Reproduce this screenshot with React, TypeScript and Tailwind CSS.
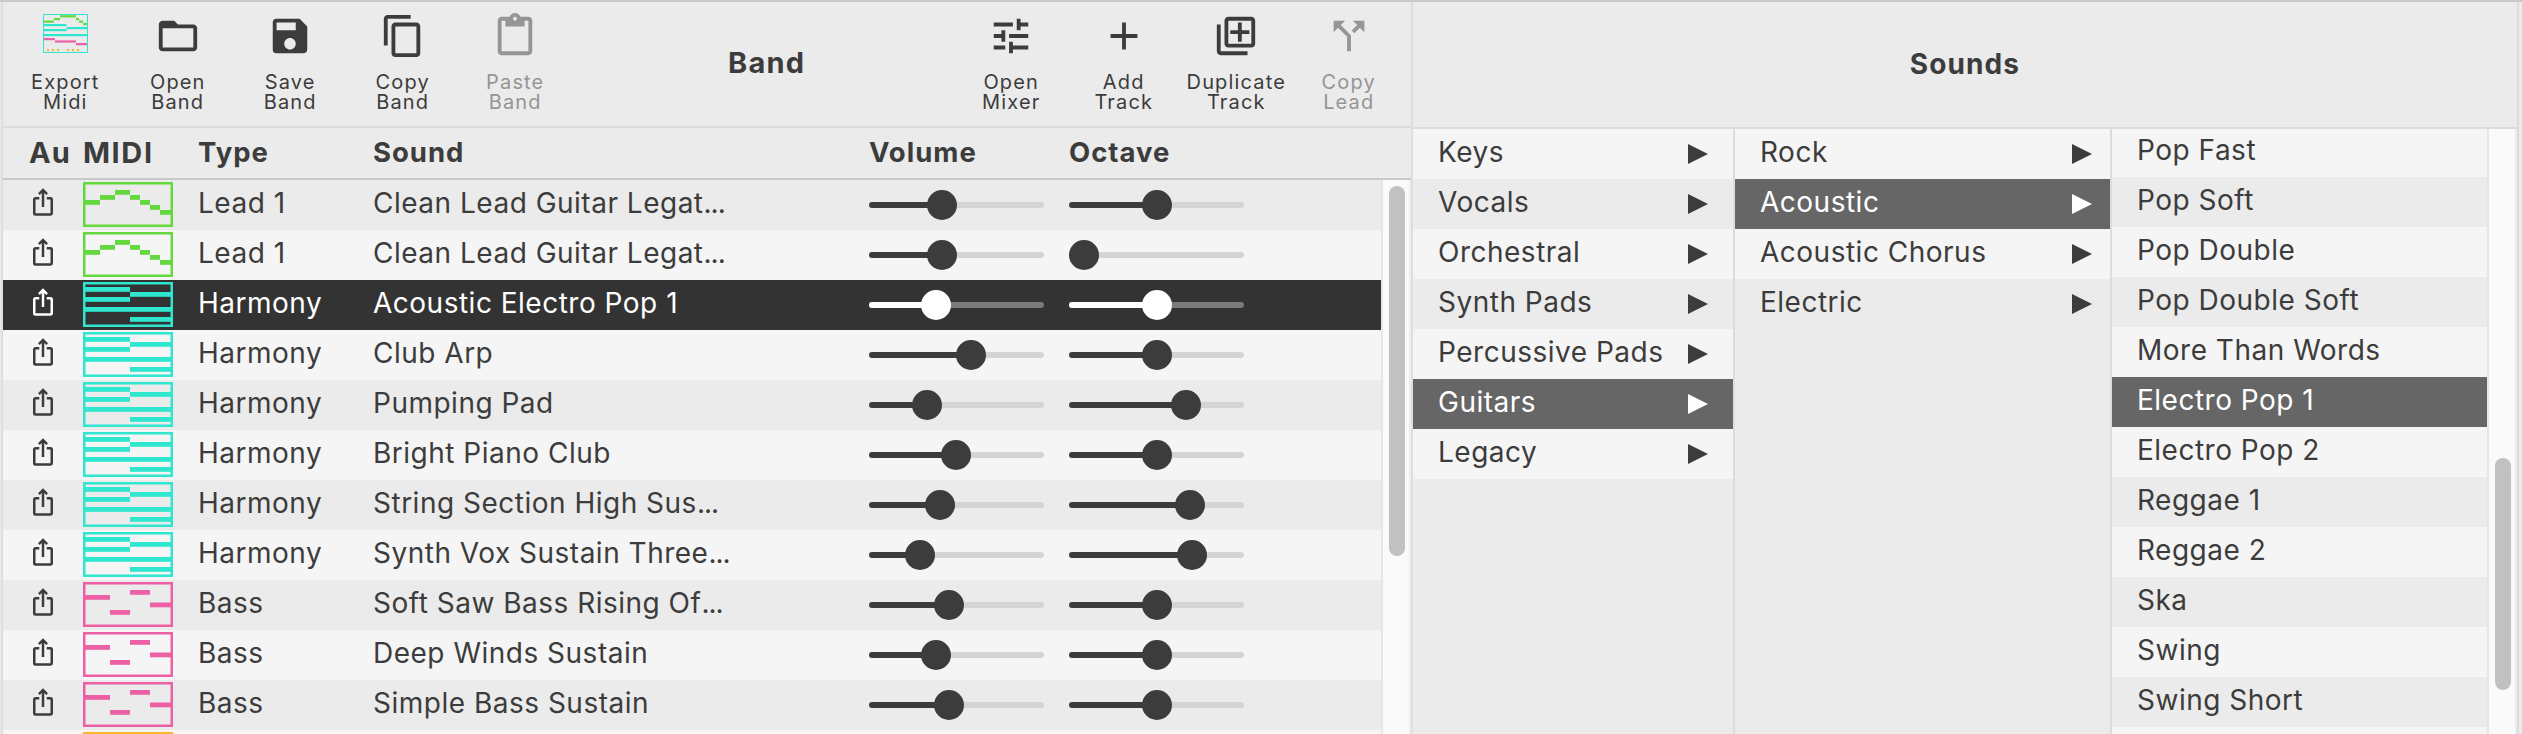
import React from "react";
import { MdFolderOpen, MdSave, MdContentCopy, MdContentPaste, MdTune, MdAdd, MdOutlineAddToPhotos, MdCallSplit, MdIosShare } from "react-icons/md";

type Kind = "lead" | "harmony" | "bass" | "drums";
type Track = { kind: Kind; type: string; sound: string; more?: boolean; vol: number; oct: number; active?: boolean };

const tracks: Track[] = [
  { kind: "lead", type: "Lead 1", sound: "Clean Lead Guitar Legat", more: true, vol: 73, oct: 88 },
  { kind: "lead", type: "Lead 1", sound: "Clean Lead Guitar Legat", more: true, vol: 73, oct: 15 },
  { kind: "harmony", type: "Harmony", sound: "Acoustic Electro Pop 1", vol: 67, oct: 88, active: true },
  { kind: "harmony", type: "Harmony", sound: "Club Arp", vol: 102, oct: 88 },
  { kind: "harmony", type: "Harmony", sound: "Pumping Pad", vol: 58, oct: 117 },
  { kind: "harmony", type: "Harmony", sound: "Bright Piano Club", vol: 87, oct: 88 },
  { kind: "harmony", type: "Harmony", sound: "String Section High Sus", more: true, vol: 71, oct: 121 },
  { kind: "harmony", type: "Harmony", sound: "Synth Vox Sustain Three", more: true, vol: 51, oct: 123 },
  { kind: "bass", type: "Bass", sound: "Soft Saw Bass Rising Of", more: true, vol: 80, oct: 88 },
  { kind: "bass", type: "Bass", sound: "Deep Winds Sustain", vol: 67, oct: 88 },
  { kind: "bass", type: "Bass", sound: "Simple Bass Sustain", vol: 80, oct: 88 },
  { kind: "drums", type: "", sound: "", vol: 73, oct: 88 },
];

const colors: Record<Kind, string> = { lead: "#64d83f", harmony: "#2fe6cf", bass: "#ee60a5", drums: "#fbb52c" };

const notes: Record<Kind, number[][]> = {
  lead: [[2, 18, 15], [17, 13, 15], [32, 8, 15], [47, 13, 10], [57, 18, 10], [67, 23, 10], [77, 28, 11]],
  harmony: [[2, 5, 45], [47, 10, 41], [2, 15, 45], [2, 25, 86], [47, 35, 41]],
  bass: [[2, 13, 25], [27, 28, 20], [47, 8, 20], [67, 20.5, 21]],
  drums: [],
};

function MidiThumb({ kind }: { kind: Kind }) {
  const c = colors[kind];
  return (
    <svg width="90" height="45" viewBox="0 0 90 45" className="block">
      <rect x="1.25" y="1.25" width="87.5" height="42.5" fill="none" stroke={c} strokeWidth="2.5" />
      {notes[kind].map(([x, y, w], i) => (
        <rect key={i} x={x} y={y} width={w} height="4.8" fill={c} />
      ))}
    </svg>
  );
}

function ExportGlyph() {
  const g = "#64d83f", t = "#2fe6cf", p = "#ee60a5", o = "#fbb52c";
  const bars: [number, number, number, string][] = [
    [1, 6.5, 10, g], [11, 4, 6, g], [17, 1.2, 16, g], [33, 4, 3, g], [36, 6.5, 4, g], [40, 9, 4, g],
    [1, 10, 22.5, t], [23.5, 13, 20.5, t], [1, 15, 22.5, t], [1, 20, 43, t],
    [1, 24, 11, p], [12, 26.4, 21, p], [33, 29, 11, p],
    [4, 35, 2, o], [9, 35, 2, o], [14, 35, 2, o], [24, 35, 2, o], [29, 35, 2, o], [34, 35, 2, o],
  ];
  return (
    <svg width="45" height="39" viewBox="0 0 45 39" className="mb-[5px] block">
      {bars.map(([x, y, w, c], i) => (
        <rect key={i} x={x} y={y} width={w} height="2.2" fill={c} />
      ))}
      <rect x="0.5" y="0.5" width="44" height="38" fill="none" stroke={t} strokeWidth="1" />
    </svg>
  );
}

function Slider({ value, active }: { value: number; active?: boolean }) {
  return (
    <div className="relative flex h-[30px] w-[175px] items-center">
      <div className={`h-[6px] w-full rounded-full ${active ? "bg-[#7b7b7b]" : "bg-[#d4d4d4]"}`} />
      <div className={`absolute left-0 h-[6px] rounded-full ${active ? "bg-white" : "bg-[#3c3c3c]"}`} style={{ width: value }} />
      <div className={`absolute size-[30px] rounded-full ${active ? "bg-white" : "bg-[#3c3c3c]"}`} style={{ left: value - 15 }} />
    </div>
  );
}

function Tool({ icon, a, b, dim }: { icon: React.ReactNode; a: string; b: string; dim?: boolean }) {
  return (
    <div className={`flex w-[112.5px] flex-col items-center ${dim ? "text-[#959595]" : "text-[#3c3c3c]"}`}>
      <div className="flex h-[70px] items-center justify-center pb-[2px]">{icon}</div>
      <div className="text-center text-[20px] leading-[20px] tracking-[1.15px] whitespace-nowrap">
        {a}
        <br />
        {b}
      </div>
    </div>
  );
}

type Item = { name: string; active?: boolean };

function List({ items, arrows }: { items: Item[]; arrows?: boolean }) {
  return (
    <div className="flex flex-col">
      {items.map((it, i) => (
        <div
          key={it.name}
          className={`flex h-[50px] shrink-0 items-center justify-between pl-[25px] ${
            it.active ? "bg-[#666666] text-white" : i % 2 ? "bg-[#ebebeb]" : "bg-[#f5f5f5]"
          }`}
        >
          <span className="pb-[4px] whitespace-nowrap">{it.name}</span>
          {arrows && (
            <svg width="20" height="20" viewBox="0 0 20 20" fill="currentColor">
              <path d="M0 0 L20 10 L0 20 Z" />
            </svg>
          )}
        </div>
      ))}
    </div>
  );
}

const groups: Item[] = [
  { name: "Keys" }, { name: "Vocals" }, { name: "Orchestral" }, { name: "Synth Pads" },
  { name: "Percussive Pads" }, { name: "Guitars", active: true }, { name: "Legacy" },
];
const families: Item[] = [{ name: "Rock" }, { name: "Acoustic", active: true }, { name: "Acoustic Chorus" }, { name: "Electric" }];
const sounds: Item[] = [
  { name: "Pop Fast" }, { name: "Pop Soft" }, { name: "Pop Double" }, { name: "Pop Double Soft" }, { name: "More Than Words" },
  { name: "Electro Pop 1", active: true }, { name: "Electro Pop 2" }, { name: "Reggae 1" }, { name: "Reggae 2" },
  { name: "Ska" }, { name: "Swing" }, { name: "Swing Short" }, { name: "" },
];

export default function App() {
  return (
    <div className="flex h-[734px] w-[2522px] flex-col overflow-hidden border-t-2 border-[#c9c9c9] bg-[#ebebeb] font-['Inter',sans-serif] text-[28px] leading-[34px] tracking-[0.5px] text-[#3c3c3c]">
      <div className="flex min-h-0 flex-1 pl-px">
        <section className="flex w-[1412px] flex-col border-x-2 border-[#dedede]">
          <header className="flex h-[126px] shrink-0 items-start border-b-2 border-[#dcdcdc] pl-[6px]">
            <div className="flex w-[719px]">
              <Tool icon={<ExportGlyph />} a="Export" b="Midi" />
              <Tool icon={<MdFolderOpen size={46} />} a="Open" b="Band" />
              <Tool icon={<MdSave size={46} />} a="Save" b="Band" />
              <Tool icon={<MdContentCopy size={46} />} a="Copy" b="Band" />
              <Tool icon={<MdContentPaste size={46} />} a="Paste" b="Band" dim />
            </div>
            <h1 className="w-[227px] pt-[44px] text-[29px] font-bold tracking-[1.2px]">Band</h1>
            <div className="flex">
              <Tool icon={<MdTune size={46} />} a="Open" b="Mixer" />
              <Tool icon={<MdAdd size={46} />} a="Add" b="Track" />
              <Tool icon={<MdOutlineAddToPhotos size={46} />} a="Duplicate" b="Track" />
              <Tool icon={<MdCallSplit size={46} />} a="Copy" b="Lead" dim />
            </div>
          </header>
          <div className="flex h-[52px] shrink-0 items-center border-b-2 border-[#c9c9c9] pb-[2px] pl-[26px] text-[27.5px] font-bold tracking-[1px]">
            <span className="w-[54px] pt-[2px] text-[29px]">Au</span>
            <span className="w-[115px] pt-[2px] text-[29px] tracking-[1.6px]">MIDI</span>
            <span className="w-[175px]">Type</span>
            <span className="w-[496px]">Sound</span>
            <span className="w-[200px]">Volume</span>
            <span>Octave</span>
          </div>
          <div className="flex min-h-0 flex-1 overflow-hidden">
            <div className="flex w-[1378px] shrink-0 flex-col">
              {tracks.map((t, i) => (
                <div
                  key={i}
                  className={`flex h-[50px] shrink-0 items-center ${
                    t.active ? "bg-[#333333] text-white" : i % 2 ? "bg-[#f5f5f5]" : "bg-[#ebebeb]"
                  }`}
                >
                  <div className="w-[80px] pb-[6px] pl-[25px]">
                    <MdIosShare size={30} />
                  </div>
                  <div className="w-[115px] pb-px">
                    <MidiThumb kind={t.kind} />
                  </div>
                  <span className="w-[175px] pb-[4px]">{t.type}</span>
                  <span className="w-[496px] pb-[4px] whitespace-nowrap">
                    {t.sound}
                    {t.more && <span className="tracking-[-1px]">...</span>}
                  </span>
                  <div className="w-[200px]">
                    <Slider value={t.vol} active={t.active} />
                  </div>
                  <Slider value={t.oct} active={t.active} />
                </div>
              ))}
            </div>
            <div className="flex-1 border-r-2 border-l-2 border-r-[#ededed] border-l-[#e6e6e6] bg-[#fafafa] pt-[6px] pl-[6px]">
              <div className="h-[370px] w-[16px] rounded-full bg-[#c1c1c1]" />
            </div>
          </div>
        </section>
        <section className="flex w-[1106px] flex-col border-r-2 border-[#dcdcdc]">
          <header className="flex h-[127px] shrink-0 justify-center border-b-2 border-[#dcdcdc] pt-[45px] text-[28px] font-bold tracking-[1.1px]">Sounds</header>
          <div className="flex min-h-0 flex-1">
            <div className="w-[322px] border-r-2 border-[#dcdcdc]">
              <div className="[&_svg]:mr-[25px]">
                <List items={groups} arrows />
              </div>
            </div>
            <div className="w-[377px] border-r-2 border-[#dcdcdc]">
              <div className="[&_svg]:mr-[18px]">
                <List items={families} arrows />
              </div>
            </div>
            <div className="w-[375px] overflow-hidden">
              <div className="-mt-[2px]">
                <List items={sounds} />
              </div>
            </div>
            <div className="flex-1 border-r-2 border-l-2 border-r-[#ebebeb] border-l-[#e6e6e6] bg-[#fafafa] pt-[329px] pl-[6px]">
              <div className="h-[232px] w-[16px] rounded-full bg-[#c1c1c1]" />
            </div>
          </div>
        </section>
      </div>
    </div>
  );
}
